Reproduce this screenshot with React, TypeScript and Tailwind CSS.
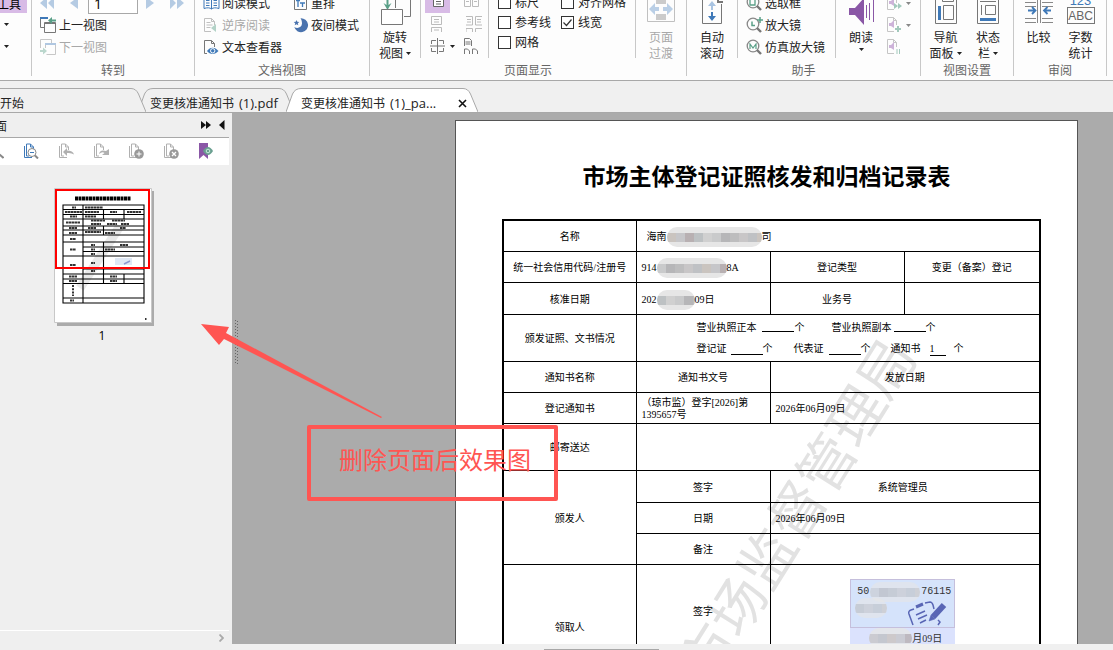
import React from "react";
import type { ReactNode } from "react";

const Caret = ({ faded = false }: { faded?: boolean }) => (
  <svg width="5" height="3" viewBox="0 0 5 3" className={faded ? "shrink-0 text-[#888]" : "shrink-0 text-[#222]"} aria-hidden="true">
    <path d="M0 0h5L2.500 3z" fill="currentColor" />
  </svg>
);

const Rule = () => <div className="h-[58px] w-px shrink-0 bg-[#c8c8c8]" />;

function Group({ label, width, children }: { label: string; width: string; children: ReactNode }) {
  return (
    <section aria-label={label || "工具"} className={`flex shrink-0 ${width}`}>
      <div className="flex min-w-0 flex-1 flex-col">
        <div className="flex h-[61px] w-full">{children}</div>
        <div className="h-[19px] text-center leading-[18px] text-[#666]">{label}</div>
      </div>
      <div className="h-[76px] w-px bg-[#c8c8c8]" />
    </section>
  );
}

function Row({ icon, text, disabled = false }: { icon: ReactNode; text: string; disabled?: boolean }) {
  return (
    <button
      disabled={disabled}
      className={`flex h-[22px] shrink-0 items-center gap-[2px] whitespace-nowrap ${disabled ? "text-[#a8a8a8]" : "text-[#222]"}`}
    >
      {icon}
      {text}
    </button>
  );
}

function Big({ icon, lines, caret = false, disabled = false, width }: { icon: ReactNode; lines: [string, string]; caret?: boolean; disabled?: boolean; width: string }) {
  return (
    <button disabled={disabled} className={`flex shrink-0 flex-col items-center justify-end ${width} ${disabled ? "text-[#a8a8a8]" : "text-[#222]"}`}>
      {icon}
      <span className="h-4 shrink-0 leading-4">{lines[0]}</span>
      <span className="flex h-4 shrink-0 items-center gap-[3px] whitespace-nowrap leading-4">
        {lines[1]}
        {caret && <Caret />}
      </span>
    </button>
  );
}

function Check({ id, text, checked = false }: { id: string; text: string; checked?: boolean }) {
  return (
    <div className="flex h-5 shrink-0 items-center gap-1 text-[#222]">
      <span className="relative flex size-[13px]">
        <input id={id} type="checkbox" defaultChecked={checked} className="peer size-[13px] appearance-none border border-[#333] bg-white" />
        <svg viewBox="0 0 13 13" className="pointer-events-none absolute inset-0 hidden peer-checked:block" aria-hidden="true">
          <path d="M2.500 6.500l3 3 5-6" fill="none" stroke="#333" strokeWidth="1.200" />
        </svg>
      </span>
      <label htmlFor={id} className="whitespace-nowrap">{text}</label>
    </div>
  );
}

const Svg = ({ children, w = 17, h = 16, className = "" }: { children: ReactNode; w?: number; h?: number; className?: string }) => (
  <svg width={w} height={h} viewBox={`0 0 ${w} ${h}`} fill="none" className={`shrink-0 ${className}`} aria-hidden="true">
    {children}
  </svg>
);

const PrevView = () => (
  <Svg>
    <path d="M5 10.500H.5V1" stroke="#777" />
    <path d="M0 1h8" stroke="#3f79b8" strokeWidth="2" />
    <path d="M4.500 5.500h11v10h-11zM4 6.500h12" stroke="#777" />
    <path d="M8 3.500l4-3.500v2.500h4v2h-4V7z" fill="#5aa088" />
  </Svg>
);
const NextView = () => (
  <Svg className="opacity-40">
    <path d="M.5 9V.5h11V4" stroke="#777" />
    <path d="M5.500 9V4.500h10v11h-9" stroke="#777" />
    <path d="M5 5h11" stroke="#3f79b8" strokeWidth="2" />
    <path d="M7 12l-4-3.500V11H0v2h3v2.500z" fill="#5aa088" />
  </Svg>
);
const Book = () => (
  <Svg>
    <path d="M1 2.500c3-1 6-1 7.500.5 1.500-1.500 4.500-1.500 7.500-.5v11c-3-1-6-1-7.500.5-1.500-1.500-4.500-1.500-7.500-.5zM8.500 3v11M3 5.500h3.500M3 8h3.500M3 10.500h3.500M10.500 5.500H14M10.500 8H14M10.500 10.500H14" stroke="#3f79b8" />
  </Svg>
);
const ReverseDoc = () => (
  <Svg className="opacity-45">
    <path d="M8 14.500H1.500v-13h7l3 3V8M8.500 1.500v3h3M3.500 5.500h4M3.500 8h6M3.500 10.500h4" stroke="#777" />
    <path d="M13 7v8L8 11z" fill="#5aa088" />
  </Svg>
);
const TextViewer = () => (
  <Svg>
    <path d="M4 14.500H1.500v-13h7l3 3V8M8.500 1.500v3h3" stroke="#777" />
    <path d="M4 12c3-4.500 8-4.500 11.500 0C12 16 7 16 4 12z" fill="#3f79b8" />
    <circle cx="9.700" cy="11.800" r="2.200" stroke="#fff" fill="#3f79b8" />
  </Svg>
);
const Reflow = () => (
  <Svg w={16}>
    <path d="M1.500 1.500h12v13h-12z" stroke="#777" />
    <path d="M3 5.500h4M5 5.500V12M7 8h5M9.500 8v4" stroke="#3f79b8" strokeWidth="1.300" />
  </Svg>
);
const Moon = () => (
  <Svg w={16}>
    <path d="M7.500 1.200A7 7 0 1 1 1.300 10c3 2 7.500.6 7.700-3.500 0-2.300-.6-4-1.500-5.300z" fill="#4a73ae" />
    <path d="M3.500 3l.8 1.800 2 .2-1.500 1.300.5 2-1.800-1-1.800 1 .5-2L.7 5l2-.2z" fill="#4a73ae" />
  </Svg>
);
const Lens = ({ children }: { children: ReactNode }) => (
  <Svg>
    <circle cx="7" cy="7" r="5.800" stroke="#888" strokeWidth="1.300" />
    <path d="M11 11l4 4" stroke="#777" strokeWidth="2.400" />
    {children}
  </Svg>
);
const Tri = ({ d, w }: { d: string; w: number }) => (
  <Svg w={w} h={12}>
    <path d={d} fill="#b5cbe3" />
  </Svg>
);
const VoiceDoc = ({ children }: { children: ReactNode }) => (
  <Svg w={16} className="opacity-55">
    <path d="M8 14.500H1.500V.5h6l3 3V8M7.500.5v3h3" stroke="#999" />
    <path d="M3 6h2l3-3v8L5 9H3z" fill="#a678bd" />
    {children}
  </Svg>
);

const rotateIcon = (
  <Svg w={32} h={35}>
    <path d="M7.500 6h2v5l3-2-4 7-4-7 3 2z" fill="#5aa088" />
    <path d="M2.500 15.500h21v15h-21z" stroke="#777" fill="#fff" />
    <path d="M16.500 14V0M31.500 0v22.500H25" stroke="#777" />
  </Svg>
);
const transIcon = (
  <Svg w={28} h={34} className="opacity-60">
    <path d="M.5 0v26.500h27V0" stroke="#999" />
    <path d="M9 0h10v9H9zM9 19h10v6H9z" fill="#aaa" />
    <path d="M2 14l6-6v4h4v4H8v4zM26 14l-6-6v4h-4v4h4v4z" fill="#8fb2d8" />
  </Svg>
);
const scrollIcon = (
  <Svg w={22} h={32}>
    <path d="M1.500 0v26.500h19V7" stroke="#777" />
    <path d="M17 0v5h5" stroke="#777" strokeWidth="2" />
    <path d="M11 4l4 5h-3v4h-2V9H7z" fill="#a9c4e2" />
    <path d="M11 24l4-5h-3v-4h-2v4H7z" fill="#3f79b8" />
  </Svg>
);
const readIcon = (
  <Svg w={27} h={32}>
    <path d="M1 11h6l9-10v27L7 18H1z" fill="#8a57a6" />
    <path d="M18.500 8v13M21.500 6v17M25.500 3v22" stroke="#8a57a6" />
  </Svg>
);
const navIcon = (
  <Svg w={22} h={32}>
    <path d="M.5 0v26.500h21V0M7.500 0v4.500h11V0M8.500 8.500h10v14h-10z" stroke="#777" />
    <path d="M4.500 9v14" stroke="#3f79b8" strokeWidth="3" />
  </Svg>
);
const statusIcon = (
  <Svg w={22} h={32}>
    <path d="M.5 0v26.500h21V0M3 4.500h16M4.500 8v10M8.500 8.500h10v9h-10z" stroke="#777" />
    <path d="M3 22.500h16" stroke="#3f79b8" strokeWidth="3" />
  </Svg>
);
const compareIcon = (
  <Svg w={28} h={32}>
    <path d="M12.500 0v26M15.500 0v26M0 5.500h11M0 9.500h11M0 21.500h11M0 25.500h11M17 5.500h11M17 9.500h11M17 21.500h11M17 25.500h11" stroke="#888" />
    <path d="M3 13.500h7M7 10l3.500 3.500L7 17M26 13.500h-6M22.500 10L19 13.500l3.500 3.500" stroke="#3f79b8" strokeWidth="1.800" />
  </Svg>
);
const countIcon = (
  <span className="flex shrink-0 flex-col items-center font-['Liberation_Sans']" aria-hidden="true">
    <span className="h-[12px] text-[13px] leading-[12px] text-[#3f79b8]">123</span>
    <span className="mb-[5px] h-[17px] w-7 border border-[#777] text-[12px] leading-[16px] text-[#666]">ABC</span>
  </span>
);

function Ribbon() {
  return (
    <header className="flex h-[81px] shrink-0 overflow-hidden border-b border-[#a8a8a8] bg-[#fdfdfd] text-[12px]">
      <Group label="" width="w-8">
        <div className="flex flex-col justify-end pb-[4px]">
          <button className="h-[22px] w-[27px] shrink-0 overflow-hidden bg-[#d8bbe6] pt-1">
            <span className="-ml-[3px] block whitespace-nowrap text-left">工具</span>
          </button>
          <button aria-label="展开" className="flex h-[22px] shrink-0 items-center pl-1"><Caret /></button>
          <button aria-label="更多" className="flex h-[22px] shrink-0 items-center pl-1"><Caret /></button>
        </div>
      </Group>
      <Group label="转到" width="w-[163px]">
        <div className="flex flex-col justify-end pb-[3px] pl-2">
          <div className="flex h-[22px] shrink-0 items-center">
            <button aria-label="第一页"><Tri w={15} d="M7 0v12L0 6zM14 0v12L8 6z" /></button>
            <button aria-label="上一页" className="ml-[14px]"><Tri w={10} d="M9 0v12L1 6z" /></button>
            <input aria-label="页码" defaultValue="1" className="ml-[9px] h-[22px] w-[50px] border border-[#a8a8a8] bg-white px-[5px] font-['Open_Sans'] text-[14px] leading-[20px]" />
            <button aria-label="下一页" className="ml-2"><Tri w={10} d="M0 0v12l8-6z" /></button>
            <button aria-label="最后一页" className="ml-[14px]"><Tri w={15} d="M0 0v12l6-6zM7 0v12l7-6z" /></button>
          </div>
          <Row icon={<PrevView />} text="上一视图" />
          <Row icon={<NextView />} text="下一视图" disabled />
        </div>
      </Group>
      <Group label="文档视图" width="w-[175px]">
        <div className="flex w-[90px] flex-col justify-end pb-[3px] pl-2">
          <Row icon={<Book />} text="阅读模式" />
          <Row icon={<ReverseDoc />} text="逆序阅读" disabled />
          <Row icon={<TextViewer />} text="文本查看器" />
        </div>
        <div className="flex flex-col justify-end pb-[25px] pl-2">
          <Row icon={<Reflow />} text="重排" />
          <Row icon={<Moon />} text="夜间模式" />
        </div>
      </Group>
      <Group label="页面显示" width="w-[317px]">
        <Big icon={rotateIcon} lines={["旋转", "视图"]} caret width="w-[50px]" />
        <Rule />
        <div className="flex w-[67px] flex-col justify-end pb-[4px] pl-1">
          <div className="flex h-[22px] shrink-0 items-center gap-3">
            <button aria-label="单页" className="flex h-full w-[25px] items-center justify-center bg-[#d8bbe6]">
              <Svg w={12} h={16}><path d="M1.500.5h10v12h-10zM4 5h5M4 7.500h5M4 10h5" stroke="#666" fill="#fff" /></Svg>
            </button>
            <button aria-label="双页"><Svg w={18}><path d="M2.500.5h6v12h-6zM10.500.5h6v12h-6zM4 5h3M4 7.500h3M12 5h3M12 7.500h3" stroke="#bbb" /></Svg></button>
          </div>
          <div className="flex h-[22px] shrink-0 items-center gap-[23px] pl-[6px]">
            <button aria-label="连续"><Svg w={12}><path d="M.5.5h10v8H.5zM.5 16v-4.500h10V16M3 3.500h5M3 6h5M3 14h5" stroke="#bbb" /></Svg></button>
            <button aria-label="连续双页"><Svg w={16}><path d="M0 .5h6.500V9H0M16 .5H9.500V9H16M0 16v-3.500h6.500V16M16 12.500H9.500V16M1 3.500h4M1 6h4M11 3.500h4M11 6h4" stroke="#bbb" /></Svg></button>
          </div>
          <div className="flex h-[22px] shrink-0 items-center gap-2 pl-[5px]">
            <button aria-label="拆分" className="flex items-center gap-[5px]">
              <Svg w={15}><path d="M7.500 0v16M0 8h15M6 2.500H1.500V6M9 2.500h4.500V6M6 13.500H1.500V10M9 13.500h4.500V10" stroke="#777" /></Svg>
              <Caret />
            </button>
            <button aria-label="单独封面"><Svg w={16}><path d="M1.500 8V.5h5l2 2V8M2.500 4h5M2.500 6h5M1.500 16v-5h3l2 2v3M9.500 16v-5h3l2 2v3" stroke="#777" /></Svg></button>
          </div>
        </div>
        <Rule />
        <div className="flex w-[63px] flex-col justify-end pb-[9px] pl-[9px]">
          <Check id="ruler" text="标尺" />
          <Check id="guides" text="参考线" />
          <Check id="grid" text="网格" />
        </div>
        <div className="flex w-[83px] flex-col justify-end pb-[29px] pl-[9px]">
          <Check id="snap" text="对齐网格" />
          <Check id="weight" text="线宽" checked />
        </div>
        <Rule />
        <Big icon={transIcon} lines={["页面", "过渡"]} disabled width="w-[50px]" />
      </Group>
      <Group label="助手" width="w-[234px]">
        <Big icon={scrollIcon} lines={["自动", "滚动"]} width="w-[50px]" />
        <Rule />
        <div className="flex w-[97px] flex-col justify-end pb-[3px] pl-2">
          <Row icon={<Lens><path d="M1 4h3v6h5V3h4" stroke="#5aa088" strokeWidth="1.300" /></Lens>} text="选取框" />
          <Row icon={<Lens><path d="M6 4.500v4h3M14 0v6M11 3h6" stroke="#5aa088" strokeWidth="1.500" /></Lens>} text="放大镜" />
          <Row icon={<Lens><path d="M4 10V5l3 4 3-4v5" stroke="#5aa088" strokeWidth="1.200" /></Lens>} text="仿真放大镜" />
        </div>
        <Rule />
        <button className="flex w-[50px] flex-col items-center justify-end text-[#222]">
          {readIcon}
          <span className="h-4 shrink-0 leading-4">朗读</span>
          <span className="flex h-4 shrink-0 items-start pt-[3px]"><Caret /></span>
        </button>
        <div className="flex flex-col justify-end pb-[3px]">
          <button aria-label="朗读下一段" className="flex h-[22px] shrink-0 items-center gap-1"><VoiceDoc><path d="M8 8l4 3-4 3zM12 8l4 3-4 3z" fill="#5aa088" /></VoiceDoc><Caret faded /></button>
          <button aria-label="提高音量" className="flex h-[22px] shrink-0 items-center gap-1"><VoiceDoc><path d="M12 9v6M9 12h6" stroke="#5aa088" strokeWidth="2" /></VoiceDoc><Caret faded /></button>
          <button aria-label="暂停" className="flex h-[22px] shrink-0 items-center"><VoiceDoc><path d="M11 10v5M13.500 10v5" stroke="#5aa088" /></VoiceDoc></button>
        </div>
      </Group>
      <Group label="视图设置" width="w-[93px]">
        <Big icon={navIcon} lines={["导航", "面板"]} caret width="w-[49px]" />
        <Big icon={statusIcon} lines={["状态", "栏"]} caret width="w-[36px]" />
      </Group>
      <Group label="审阅" width="w-[93px]">
        <Big icon={compareIcon} lines={["比较", ""]} width="w-[49px]" />
        <Big icon={countIcon} lines={["字数", "统计"]} width="w-[35px]" />
      </Group>
    </header>
  );
}

function Tab({ text, suffix = "", width, pad, active = false, first = false, layer }: { text: string; suffix?: string; width: string; pad: string; active?: boolean; first?: boolean; layer: string }) {
  const fill = active ? "#ffffff" : "#f0f0f0";
  return (
    <div className={`relative flex h-6 shrink-0 ${width} ${layer} ${first ? "" : "-ml-2"}`}>
      <div className="absolute inset-0 flex">
        {!first && (
          <Svg w={15} h={24}><path d="M0 24L6.500 6Q9 .5 15 .5V24z" fill={fill} /><path d="M0 24L6.500 6Q9 .5 15 .5" stroke="#a8a8a8" /></Svg>
        )}
        <div className={`flex-1 border-t border-[#a8a8a8] ${active ? "bg-white" : "bg-[#f0f0f0]"}`} />
        <Svg w={15} h={24}><path d="M0 .5Q5 .5 7.500 6L15 24H0z" fill={fill} /><path d="M0 .5Q5 .5 7.500 6L15 24" stroke="#a8a8a8" /></Svg>
      </div>
      <button role="tab" aria-selected={active} className={`relative flex flex-1 items-center gap-[5px] whitespace-nowrap pt-[7px] text-[#222] ${pad}`}>
        <span>{text}</span>
        {suffix && <span className="text-[13px]">{suffix}</span>}
      </button>
      {active && (
        <button aria-label="关闭" className="relative mr-[11px] pt-[6px]">
          <Svg w={9} h={9}><path d="M1 1l7 7M8 1L1 8" stroke="#111" strokeWidth="1.600" /></Svg>
        </button>
      )}
    </div>
  );
}

const stack = <path d="M1.500 3v11.500H9M10.500 7V4l-3-3h-4v12H6M7.500 1v3h3" stroke="currentColor" />;

function Thumb() {
  return (
    <svg width="100" height="138" viewBox="0 0 100 138" fill="none" aria-hidden="true">
      <path d="M3 3h97v135H3z" fill="#ababab" />
      <path d="M.5.5h97v134H.5z" fill="#fff" stroke="#c8c8c8" />
      <path d="M26 100L66 38" stroke="#e9e9e9" strokeWidth="9" />
      <path d="M21 10.500h56" stroke="#000" strokeWidth="4" strokeDasharray="3 .5" />
      <path d="M9 17h81v98H9zM9 21.500h81M9 26.500h81M9 31h81M9 38h81M9 42h81M9 47h81M9 54h81M29 59h61M29 63.500h61M9 68h81M29 81h61M9 86h81M9 91h81M9 95.500h81M9 110h81" stroke="#000" strokeWidth="1.100" />
      <path d="M29 17v98M49.500 21.500V31M49.500 38v9M49.500 54v41M70 21.500V31M70 86v9" stroke="#000" strokeWidth="1.100" />
      <path d="M31 19.500h18M11 24h17M31 24h14M56 24h7M73 24h14M16 28.500h7M31 28.500h11M37 32.500h14M58 32.500h13M37 36h10M53 36h10M67 36h8M12 34.500h14M15 40h8M34 40h8M66 40h6M15 45h8M31 44h16M51 45h10M16 51h6M37 57h4M66 57h8M37 61.500h4M51 61.500h10M37 66h4M16 61.500h6M16 77h6M37 75h4M37 83h4M15 88.500h8M56 88.500h7M15 93h8M56 93h7M16 112.500h4M18 19.500h4" stroke="#333" strokeWidth="1.800" strokeDasharray="2.500 .4" />
      <path d="M19 97v11" stroke="#333" strokeWidth="2" strokeDasharray="2 1.200" />
      <path d="M61 70h17v7H61z" fill="#dfe8f5" />
      <path d="M70 76l6-3" stroke="#8d97cf" strokeWidth="1.500" />
      <path d="M91 131h1.500" stroke="#333" strokeWidth="2" />
      <path d="M2 2h93v78H2z" stroke="#f00" strokeWidth="2" />
    </svg>
  );
}

function Sidebar() {
  return (
    <aside className="flex w-[232px] shrink-0 flex-col overflow-hidden bg-[#efefef] pr-[3px]">
      <div className="flex h-[25px] shrink-0 items-center border-b border-[#a8a8a8] text-[12px] text-[#222]">
        <h2 className="-ml-[17px] flex-1 pt-px">页面</h2>
        <button aria-label="展开面板"><Svg w={10} h={8}><path d="M0 0l5 4-5 4zM5 0l5 4-5 4z" fill="#111" /></Svg></button>
        <button aria-label="收起面板" className="ml-2 mr-1"><Svg w={6} h={10}><path d="M5.500 0v10L0 5z" fill="#111" /></Svg></button>
      </div>
      <div className="flex h-[27px] shrink-0 items-center bg-white pb-px">
        <div className="-ml-3 flex gap-[19px] text-[#b0b0b0]">
          <button aria-label="放大缩略图" className="text-[#888]"><Svg w={16}>{stack}<path d="M11.500 11.500l4 3.500" stroke="currentColor" strokeWidth="2" /></Svg></button>
          <button aria-label="缩小缩略图" className="text-[#3f79b8]"><Svg w={16}>{stack}<circle cx="9" cy="9.500" r="4" fill="#fff" stroke="#888" /><path d="M7 9.500h4" stroke="#3f79b8" /><path d="M12 12.500l3 3" stroke="#888" strokeWidth="2" /></Svg></button>
          <button aria-label="向左旋转"><Svg w={16}>{stack}<path d="M5 9l4-4v2.500q6 0 7 4-2.500-2-7-1.500V13z" fill="currentColor" /></Svg></button>
          <button aria-label="向右旋转"><Svg w={16}>{stack}<path d="M16 12H9l2.500-2q-2-2-5.500 1 1-5 7-3l3-2z" fill="currentColor" /></Svg></button>
          <button aria-label="插入页面"><Svg w={16}>{stack}<circle cx="11" cy="11" r="4.800" fill="#999" /><path d="M8.500 11h5M11 8.500v5" stroke="#fff" /></Svg></button>
          <button aria-label="删除页面"><Svg w={16}>{stack}<circle cx="11" cy="11" r="4.800" fill="#999" /><path d="M9 9l4 4M13 9l-4 4" stroke="#fff" strokeWidth="1.300" /></Svg></button>
          <button aria-label="书签"><Svg w={16}><path d="M1 0h9v16l-4.500-4L1 16z" fill="#8a57a6" /><path d="M5 8q5-8 10 0-5 8-10 0z" fill="#6a9f90" /><circle cx="10" cy="8" r="1.800" stroke="#dfe" strokeWidth=".8" /></Svg></button>
        </div>
      </div>
      <div className="min-h-0 flex-1 pl-[54px] pt-[23px]">
        <button className="flex w-[100px] flex-col items-center">
          <Thumb />
          <span className="-ml-1 mt-[3px] font-['Open_Sans'] text-[12px] leading-[13px]">1</span>
        </button>
      </div>
      <div className="flex h-5 shrink-0 items-start justify-end border-t border-white pr-[5px] pt-[3px]">
        <button aria-label="向右滚动"><Svg w={5} h={8}><path d="M.5.5L4 4 .5 7.500" stroke="#aaa" strokeWidth="1.800" /></Svg></button>
      </div>
    </aside>
  );
}

const tones = ["#c9cacb", "#b6b6b8", "#bdbdbe", "#c8c6c7", "#bfc1c4", "#cac4bf", "#c6c6c9", "#b8b0b2", "#bdc1c3", "#d0d0d0"];
function Blur({ w, id, className = "" }: { w: number; id: string; className?: string }) {
  const n = Math.ceil(w / 9);
  return (
    <svg width={w} height="20" viewBox={`0 0 ${w} 20`} className={`shrink-0 ${className}`} aria-hidden="true">
      <clipPath id={id}><rect width={w} height="20" rx="10" /></clipPath>
      <g clipPath={`url(#${id})`}>
        <rect width={w} height="20" fill="#e6e6e6" />
        {Array.from({ length: n }, (_, i) => (
          <rect key={i} x={i * 9} y="6" width="9" height="9" fill={tones[(i + w) % tones.length]} />
        ))}
      </g>
    </svg>
  );
}

const Blank = ({ className, children }: { className: string; children?: ReactNode }) => (
  <span className={`shrink-0 border-b border-black ${className}`}>{children}</span>
);

const cell = "border border-black p-0 pt-[3px] text-center font-normal";
const left = "border border-black p-0 pl-[5px] pt-[3px] text-left";

function Doc() {
  return (
    <article className="relative ml-[223px] mr-[35px] mt-[7px] h-full min-w-0 flex-1 overflow-hidden border border-[#555] bg-white font-['Liberation_Serif','Noto_Sans_CJK_SC',serif] text-black">
      <div aria-hidden="true" className="absolute left-[338px] top-[388px] -translate-x-1/2 -translate-y-1/2 -rotate-[58deg] whitespace-nowrap font-['Noto_Sans_CJK_SC',sans-serif] text-[56px] leading-none text-[#e2e2e2]">
        市场监督管理局
      </div>
      <h1 className="relative mt-[42px] text-center text-[23px] font-bold leading-[30px]">市场主体登记证照核发和归档记录表</h1>
      <div className="relative mt-[26px] pl-[46px] pr-[36px]">
        <table className="w-full table-fixed border-collapse border-2 border-black text-[10px] leading-[12px]">
          <colgroup>
            <col className="w-[133px]" />
            <col className="w-[134px]" />
            <col className="w-[134px]" />
            <col />
          </colgroup>
          <tbody>
            <tr className="h-[31px]">
              <th className={cell}>名称</th>
              <td colSpan={3} className={left}>
                <div className="flex items-center pl-[5px]">海南<Blur w={95} id="m1" />司</div>
              </td>
            </tr>
            <tr className="h-[31px]">
              <th className={cell}>统一社会信用代码/注册号</th>
              <td className={left}><div className="flex items-center">914<Blur w={70} id="m2" />8A</div></td>
              <th className={cell}>登记类型</th>
              <td className={cell}>变更（备案）登记</td>
            </tr>
            <tr className="h-[32px]">
              <th className={cell}>核准日期</th>
              <td className={left}><div className="flex items-center">202<Blur w={38} id="m3" />09日</div></td>
              <th className={cell}>业务号</th>
              <td className={cell} />
            </tr>
            <tr className="h-[47px]">
              <th className={cell}>颁发证照、文书情况</th>
              <td colSpan={3} className="border border-black p-0 pl-1 pt-px text-left">
                <div className="flex h-[21px] items-center pl-14">
                  <span>营业执照正本</span><Blank className="ml-[5px] h-[9px] w-8" /><span className="ml-px mr-[27px]">个</span>
                  <span>营业执照副本</span><Blank className="ml-[2px] h-[9px] w-8" /><span>个</span>
                </div>
                <div className="flex h-[21px] items-center pl-14">
                  <span>登记证</span><Blank className="ml-1 h-[13px] w-8" /><span className="mr-[21px]">个</span>
                  <span>代表证</span><Blank className="ml-[5px] h-[13px] w-8" /><span className="mr-5">个</span>
                  <span>通知书</span><Blank className="ml-[9px] h-[15px] w-4 pt-[2px]">1</Blank><span className="ml-2">个</span>
                </div>
              </td>
            </tr>
            <tr className="h-[31px]">
              <th className={cell}>通知书名称</th>
              <th className={cell}>通知书文号</th>
              <th colSpan={2} className={cell}>发放日期</th>
            </tr>
            <tr className="h-[31px]">
              <td className={cell}>登记通知书</td>
              <td className={left}>（琼市监）登字[2026]第<br />1395657号</td>
              <td colSpan={2} className={left}>2026年06月09日</td>
            </tr>
            <tr className="h-[47px]">
              <th className={cell}>邮寄送达</th>
              <td colSpan={3} className={cell} />
            </tr>
            <tr className="h-[32px]">
              <th rowSpan={3} className={cell}>颁发人</th>
              <th className={cell}>签字</th>
              <td colSpan={2} className={`${cell} pr-1`}>系统管理员</td>
            </tr>
            <tr className="h-[31px]">
              <th className={cell}>日期</th>
              <td colSpan={2} className={left}>2026年06月09日</td>
            </tr>
            <tr className="h-[31px]">
              <th className={cell}>备注</th>
              <td colSpan={2} className={cell} />
            </tr>
            <tr className="h-[92px]">
              <th rowSpan={2} className={cell}>领取人</th>
              <th className={cell}>签字</th>
              <td colSpan={2} className="border border-black p-0 pr-1 pt-[14px] align-top">
                <div className="mx-auto w-[105px] font-['Liberation_Mono','Noto_Sans_CJK_SC',monospace] text-[#333]">
                  <div className="flex h-[49px] flex-col border border-[#c5bfdc] bg-[#d5e3fb]">
                    <div className="flex h-6 items-center justify-between pl-[6px] pr-[3px]"><span>50</span><Blur w={50} id="m4" className="opacity-60" /><span>76115</span></div>
                    <div className="flex justify-between pl-1 pr-[6px]">
                      <Blur w={32} id="m5" className="-mt-[6px] opacity-60" />
                      <svg width="40" height="26" viewBox="0 0 40 26" className="-mt-[4px]" fill="none" stroke="#5966b5" aria-hidden="true">
                        <path d="M5 25L1 14q-1-3 2-4l3-1M17 3l5-1q2 0 3 3l1 4M30 25l2-3-2-2" strokeWidth="1.500" />
                        <path d="M8 7l7-3" strokeWidth="3" />
                        <path d="M8 15l9-4M10 19l9-4M12 23l6-3" strokeWidth="1.500" />
                        <path d="M25 17L36 5" strokeWidth="6" />
                        <path d="M21 21l2-6 4 4z" fill="#5966b5" strokeWidth=".5" />
                      </svg>
                    </div>
                  </div>
                  <div className="flex h-[29px] items-start bg-[#dbe2fd] pl-[19px]"><Blur w={43} id="m6" className="opacity-80" /><span className="pt-[5px] font-['Liberation_Serif','Noto_Sans_CJK_SC',serif]">月09日</span></div>
                </div>
              </td>
            </tr>
            <tr className="h-8">
              <th className={cell}>日期</th>
              <td colSpan={2} className={cell} />
            </tr>
          </tbody>
        </table>
      </div>
    </article>
  );
}

export default function App() {
  return (
    <div className="flex h-screen flex-col overflow-hidden bg-[#f0f0f0] font-['Noto_Sans_CJK_SC',sans-serif]">
      <Ribbon />
      <nav role="tablist" aria-label="文档" className="flex h-8 shrink-0 items-end border-b border-[#a8a8a8] font-['Open_Sans','Noto_Sans_CJK_SC',sans-serif] text-[12px]">
        <Tab text="开始" width="w-[146px]" pad="pl-0" first layer="z-10" />
        <Tab text="变更核准通知书" suffix="(1).pdf" width="w-[156px]" pad="pl-3" layer="z-0" />
        <Tab text="变更核准通知书" suffix="(1)_pa..." width="w-[192px]" pad="pl-[15px]" active layer="z-20" />
      </nav>
      <main className="relative flex min-h-0 flex-1">
        <Sidebar />
        <div className="mb-[6px] flex min-w-0 flex-1 overflow-hidden bg-[#ababab]">
          <Doc />
        </div>
        <div className="absolute bottom-0 left-[544px] h-px w-[115px] bg-[#a8a8a8]" />
        <svg width="5" height="44" viewBox="0 0 5 44" className="absolute left-[234px] top-[207px]" aria-hidden="true">
          <path d="M1.500 0v44M3.500 1v43" stroke="#666" strokeDasharray="1 2" />
        </svg>
        <svg width="184" height="98" viewBox="0 0 184 98" className="absolute left-[200px] top-[209px]" aria-hidden="true">
          <path d="M1 2l28 3-3 6 156 84-1 1L24 17l-5 6z" fill="#ff5552" />
        </svg>
        <div className="absolute left-[307px] top-[312px] flex h-[76px] w-[251px] items-center whitespace-nowrap rounded-[2px] border-4 border-[#ff5552] pb-2 pl-7 text-[24px] text-[#ff5552]">
          删除页面后效果图
        </div>
      </main>
    </div>
  );
}
